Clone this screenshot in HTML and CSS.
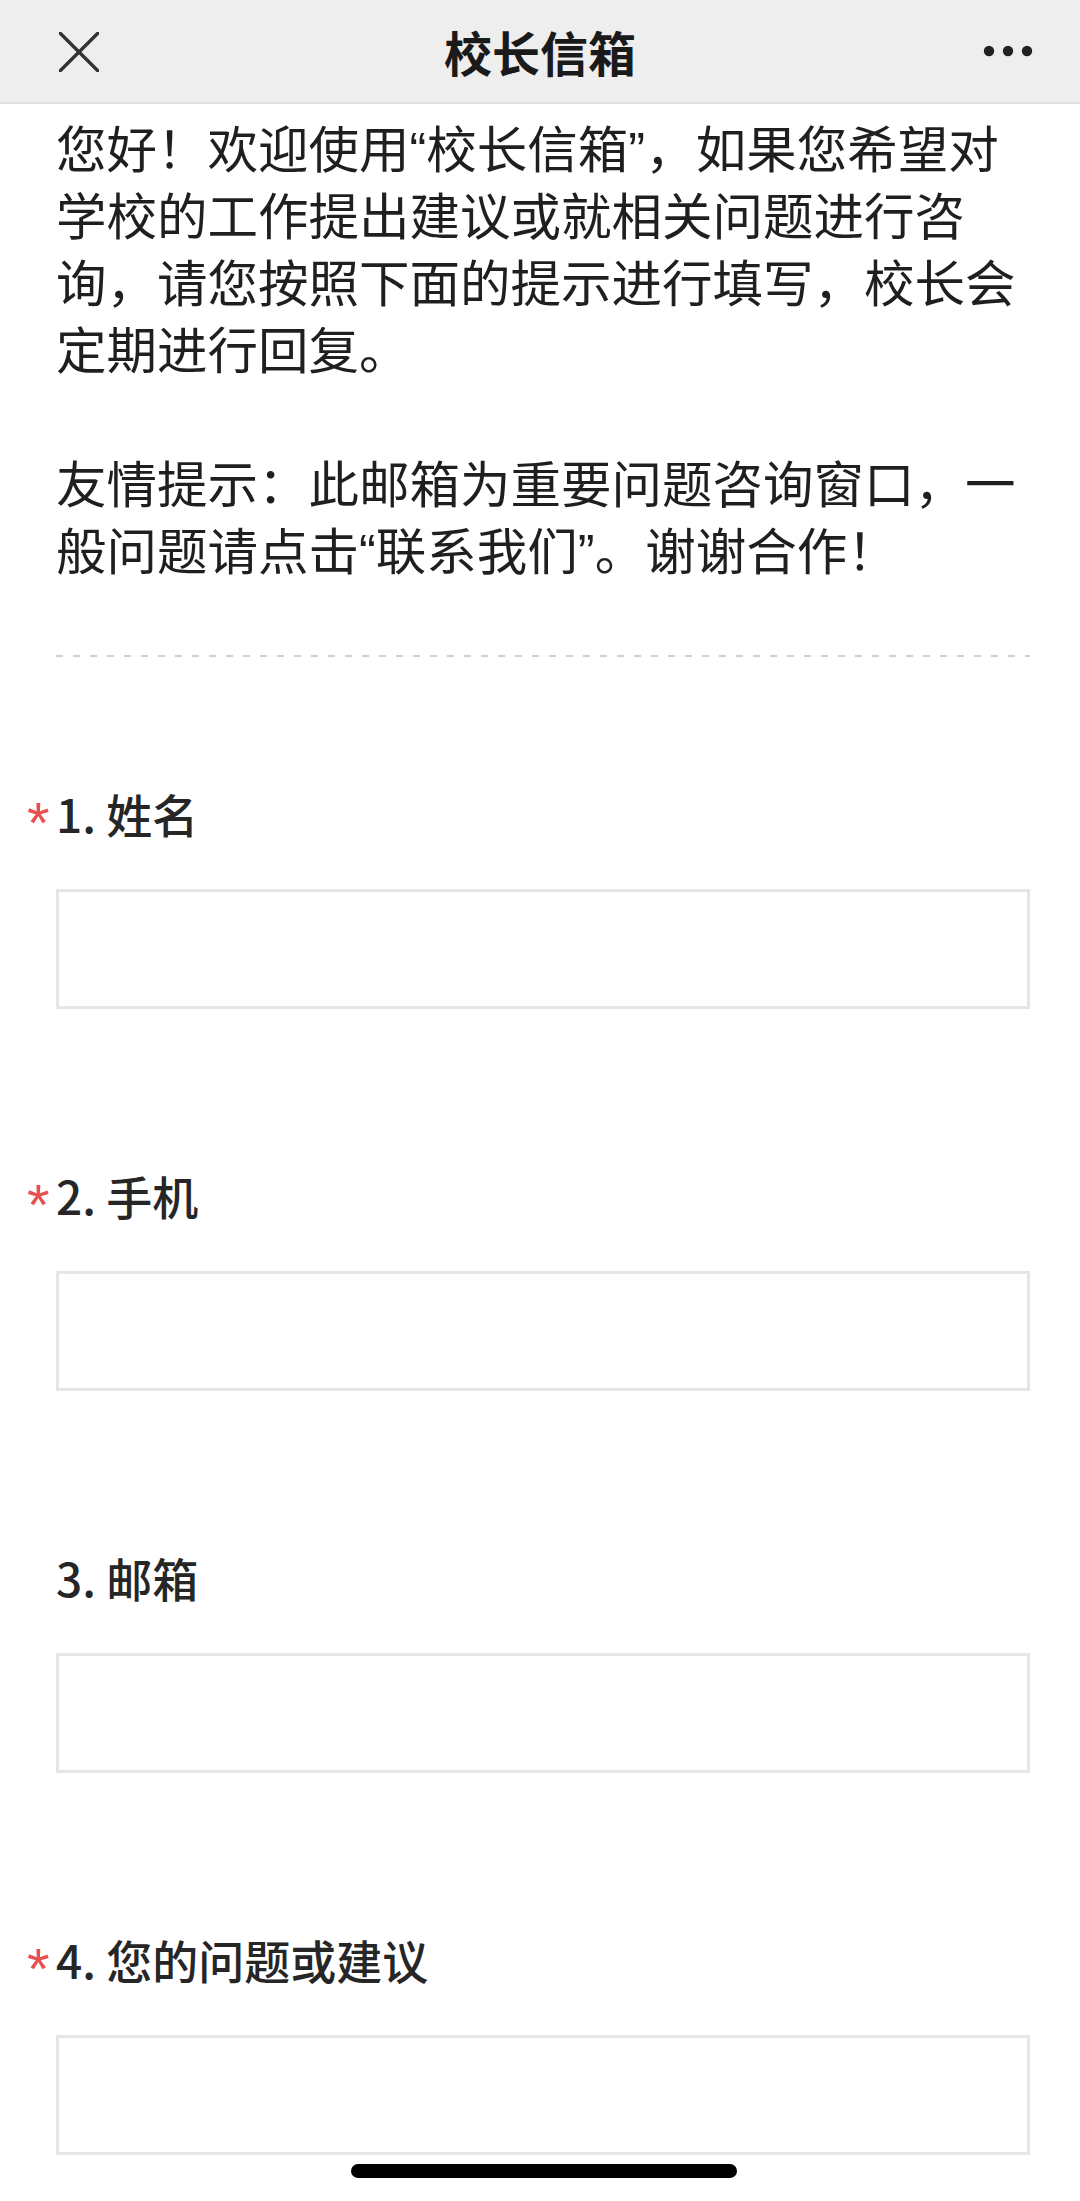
FILE: index.html
```html
<!DOCTYPE html>
<html lang="zh-CN">
<head>
<meta charset="utf-8">
<title>校长信箱</title>
<link rel="stylesheet" href="styles.css">
</head>
<body>
<header class="nav">
  <div class="nav-left">
    <svg class="icon-close" width="40" height="40" viewBox="0 0 40 40"><path d="M1 1 L39 39 M39 1 L1 39" stroke="#333" stroke-width="3.4" stroke-linecap="round" fill="none"/></svg>
  </div>
  <div class="nav-title">校长信箱</div>
  <div class="nav-right">
    <svg class="icon-more" width="50" height="12" viewBox="0 0 50 12"><circle cx="6" cy="6" r="5.2" fill="#222"/><circle cx="25" cy="6" r="5.2" fill="#222"/><circle cx="44" cy="6" r="5.2" fill="#222"/></svg>
  </div>
</header>
<main class="page">
  <div class="intro">您好！欢迎使用<span class="q">“</span>校长信箱<span class="q">”</span>，如果您希望对<br>学校的工作提出建议或就相关问题进行咨<br>询，请您按照下面的提示进行填写，校长会<br>定期进行回复。<br><br>友情提示：此邮箱为重要问题咨询窗口，一<br>般问题请点击<span class="q">“</span>联系我们<span class="q">”</span>。谢谢合作！</div>
  <div class="divider"></div>
  <form class="form">
    <div class="field">
      <div class="label"><span class="req">*</span>1. 姓名</div>
      <div class="box"></div>
    </div>
    <div class="field">
      <div class="label"><span class="req">*</span>2. 手机</div>
      <div class="box"></div>
    </div>
    <div class="field">
      <div class="label">3. 邮箱</div>
      <div class="box"></div>
    </div>
    <div class="field">
      <div class="label"><span class="req">*</span>4. 您的问题或建议</div>
      <div class="box"></div>
    </div>
  </form>
</main>
<div class="home-indicator"></div>
</body>
</html>
```
FILE: styles.css
```css
html, body {
  margin: 0;
  padding: 0;
  background: #ffffff;
}
body {
  font-family: "Noto Sans CJK SC", "Noto Sans", sans-serif;
  color: #1f1f1f;
  width: 1080px;
  height: 2201px;
  overflow: hidden;
}
.nav {
  height: 102px;
  background: #eeeeee;
  border-bottom: 2px solid #e0e0e0;
  display: grid;
  grid-template-columns: 1fr auto 1fr;
  align-items: center;
}
.nav-left {
  display: flex;
  align-items: center;
  padding-left: 59px;
}
.icon-close {
  display: block;
  margin-top: 2px;
}
.nav-title {
  font-size: 48px;
  font-weight: 700;
  color: #1a1a1a;
  line-height: 60px;
}
.nav-right {
  display: flex;
  justify-content: flex-end;
  padding-right: 47px;
}
.icon-more {
  display: block;
}
.page {
  padding: 0 50px 0 56px;
}
.intro {
  padding-top: 9px;
  font-size: 50.5px;
  line-height: 67px;
  color: #1f1f1f;
  white-space: nowrap;
}
.q {
  font-family: "Liberation Sans", sans-serif;
  line-height: 0;
}
.divider {
  margin-top: 73px;
  height: 2px;
  background: repeating-linear-gradient(to right, #cfcfcf 0, #cfcfcf 7px, transparent 7px, transparent 17px);
}
.form {
  margin: 0;
  padding-top: 126px;
  display: flex;
  flex-direction: column;
  gap: 156px;
}
.field {
  display: flex;
  flex-direction: column;
}
.label {
  font-size: 46px;
  font-weight: 500;
  line-height: 60px;
  color: #262626;
  height: 60px;
  white-space: nowrap;
}
.req {
  display: inline-block;
  width: 29px;
  margin-left: -29px;
  color: #e8504f;
  font-family: "Liberation Sans", sans-serif;
  font-size: 58px;
  font-weight: 400;
  line-height: 0;
  position: relative;
  top: 10px;
}
.box {
  margin-top: 46px;
  height: 120px;
  box-sizing: border-box;
  border: 3px solid #e6e6e6;
  background: #ffffff;
}
.home-indicator {
  position: fixed;
  left: 351px;
  top: 2164px;
  width: 386px;
  height: 14px;
  border-radius: 7px;
  background: #000000;
}
```
